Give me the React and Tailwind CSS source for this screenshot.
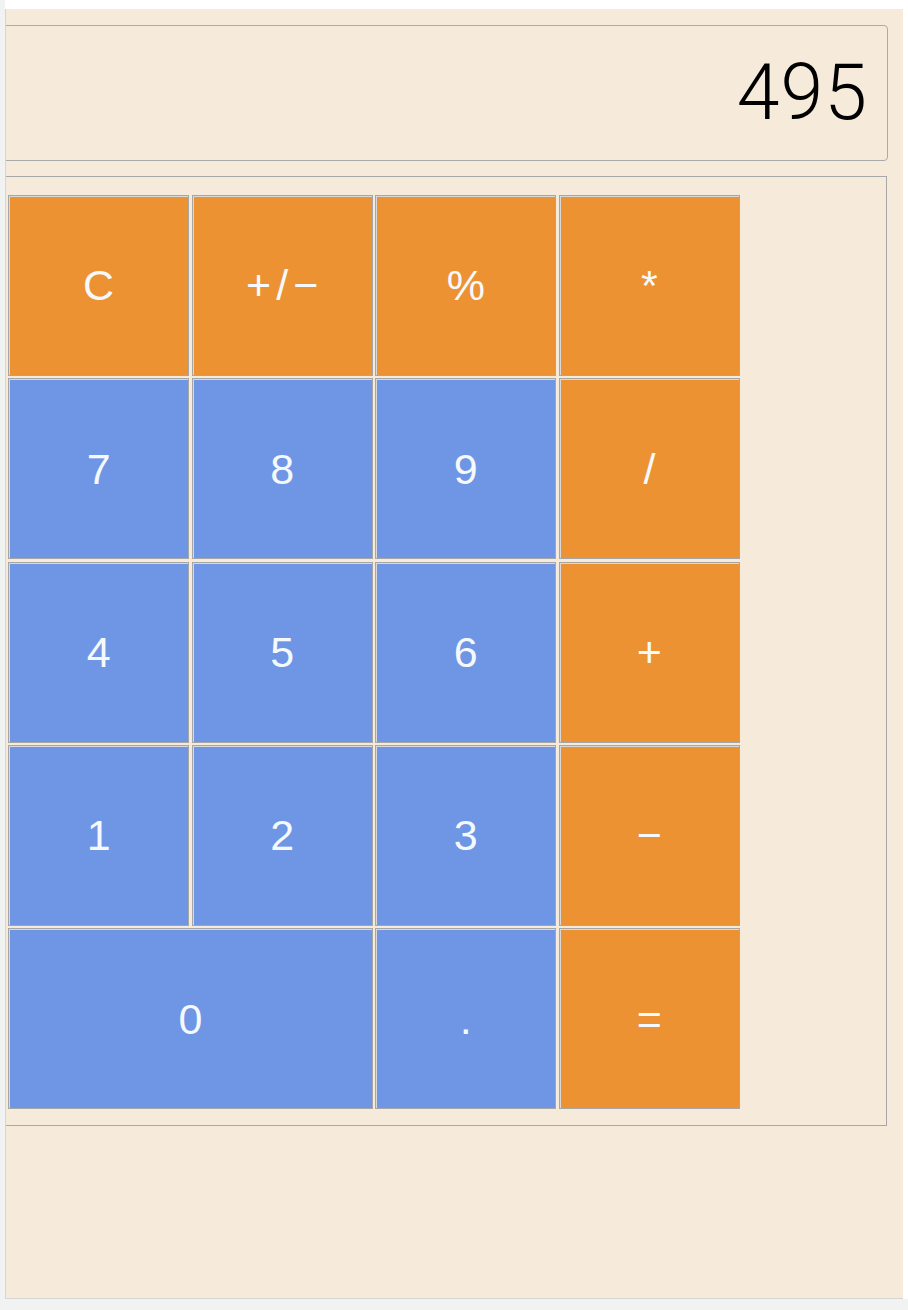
const keys = [
  { label: "C", kind: "op" },
  { label: "+/−", kind: "op", spaced: true },
  { label: "%", kind: "op" },
  { label: "*", kind: "op" },
  { label: "7", kind: "num" },
  { label: "8", kind: "num" },
  { label: "9", kind: "num" },
  { label: "/", kind: "op" },
  { label: "4", kind: "num" },
  { label: "5", kind: "num" },
  { label: "6", kind: "num" },
  { label: "+", kind: "op" },
  { label: "1", kind: "num" },
  { label: "2", kind: "num" },
  { label: "3", kind: "num" },
  { label: "−", kind: "op" },
  { label: "0", kind: "num", wide: true },
  { label: ".", kind: "num" },
  { label: "=", kind: "op" },
];

function Key({ k }) {
  return (
    <button
      className={
        (k.kind === "op" ? "bg-[#ec9233]" : "bg-[#6f95e5]") +
        (k.wide ? " col-span-2" : "") +
        (k.spaced ? " tracking-[0.12em] pl-[0.12em]" : "") +
        " h-[181px] border border-[#a6a6a6] shadow-[inset_1px_1px_0_#d9d9d9] text-[#f5f9fc] text-[43px] font-['Liberation_Sans',Arial,sans-serif] flex items-center justify-center"
      }
    >
      {k.label}
    </button>
  );
}

export default function App() {
  return (
    <div className="flex w-[908px] h-[1310px] bg-[#f1f2f2]">
      <div className="w-[5px] shrink-0" />
      <div className="flex flex-col w-[903px]">
        <div className="h-[9px] bg-white" />
        <div className="flex h-[1290px]">
          <div className="w-[898px] bg-[#f6ebdb] border-l border-b border-[#d6d6d6] overflow-hidden">
            <div className="mt-[16px] -ml-[20px] mr-[15px] h-[136px] border border-[#aaaaaa] rounded-[4px] flex items-center justify-end pr-[19px]">
              <span className="font-['Roboto',sans-serif] font-light text-[77px] tracking-[1px] leading-none text-black">
                495
              </span>
            </div>
            <div className="mt-[15px] -ml-[20px] mr-[16px] border border-[#a8a8a8] pt-[18px] pb-[16px] pl-[21px]">
              <div className="grid grid-cols-4 w-[732px] gap-[2.33px]">
                {keys.map((k, i) => (
                  <Key key={i} k={k} />
                ))}
              </div>
            </div>
          </div>
          <div className="w-[5px] bg-white" />
        </div>
      </div>
    </div>
  );
}
